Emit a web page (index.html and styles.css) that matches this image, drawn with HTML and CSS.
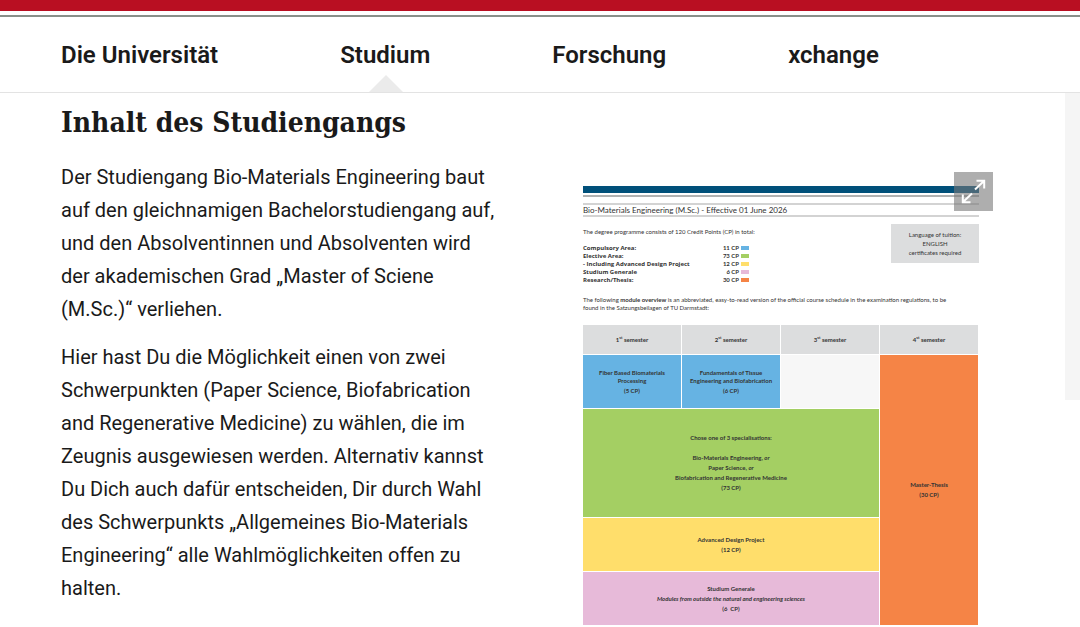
FILE: index.html
```html
<!DOCTYPE html>
<html lang="de">
<head>
    <meta charset="UTF-8">
    <meta name="viewport" content="width=device-width, initial-scale=1.0">
    <title>Inhalt des Studiengangs</title>
    <link rel="stylesheet" href="styles.css">
</head>
<body>
    <header class="header">
        <nav class="nav">
            <a href="#">Die Universität</a>
            <a href="#" class="active">Studium</a>
            <a href="#">Forschung</a>
            <a href="#">xchange</a>
        </nav>
    </header>

    <div class="page">
        <main class="content">
            <h2>Inhalt des Studiengangs</h2>
            <div class="columns">
                <div class="text">
                    <p>Der Studiengang Bio-Materials Engineering baut auf den gleichnamigen Bachelorstudiengang auf, und den Absolventinnen und Absolventen wird der akademischen Grad „Master of Sciene (M.Sc.)“ verliehen.</p>
                    <p>Hier hast Du die Möglichkeit einen von zwei Schwerpunkten (Paper Science, Biofabrication and Regenerative Medicine) zu wählen, die im Zeugnis ausgewiesen werden. Alternativ kannst Du Dich auch dafür entscheiden, Dir durch Wahl des Schwerpunkts „Allgemeines Bio-Materials Engineering“ alle Wahlmöglichkeiten offen zu halten.</p>
                </div>

                <figure class="plan">
                    <button class="zoom" type="button" aria-label="Bild vergrößern">
                        <svg width="39" height="39" viewBox="0 0 39 39" fill="none" stroke="#fff" stroke-width="2">
                            <path d="M21 17.5 30 9M22.5 8.8H30.2V16.5M18 21.5 9 30M8.8 22.5V30.2H16.5"/>
                        </svg>
                    </button>
                    <div class="bar"></div>
                    <div class="plan_title">Bio-Materials Engineering (M.Sc.) - Effective 01 June 2026</div>
                    <div class="intro">
                        <div>
                            <p class="total">The degree programme consists of 120 Credit Points (CP) in total:</p>
                            <table class="legend">
                                <tr><th>Compulsory Area:</th><td>11 CP</td><td><i class="blue"></i></td></tr>
                                <tr><th>Elective Area:</th><td>73 CP</td><td><i class="green"></i></td></tr>
                                <tr><th>- Including Advanced Design Project</th><td>12 CP</td><td><i class="yellow"></i></td></tr>
                                <tr><th>Studium Generale</th><td>6 CP</td><td><i class="pink"></i></td></tr>
                                <tr><th>Research/Thesis:</th><td>30 CP</td><td><i class="orange"></i></td></tr>
                            </table>
                        </div>
                        <div class="language">Language of tuition:<br>ENGLISH<br>certificates required</div>
                    </div>
                    <p class="note">The following <b>module overview</b> is an abbreviated, easy-to-read version of the official course schedule in the examination regulations, to be found in the Satzungsbeilagen of TU Darmstadt:</p>
                    <table class="modules">
                        <tr class="semesters">
                            <th>1<sup>st</sup> semester</th>
                            <th>2<sup>st</sup> semester</th>
                            <th>3<sup>st</sup> semester</th>
                            <th>4<sup>st</sup> semester</th>
                        </tr>
                        <tr class="row">
                            <td class="blue"><p>Fiber Based Biomaterials<br>Processing</p><p>(5 CP)</p></td>
                            <td class="blue"><p>Fundamentals of Tissue<br>Engineering and Biofabrication</p><p>(6 CP)</p></td>
                            <td class="empty"></td>
                            <td class="orange" rowspan="4"><p>Master-Thesis</p><p>(30 CP)</p></td>
                        </tr>
                        <tr class="row_big">
                            <td class="green" colspan="3">
                                <p>Chose one of 3 specialisations:</p>
                                <p>&nbsp;</p>
                                <p>Bio-Materials Engineering, <em>or</em></p>
                                <p>Paper Science, <em>or</em></p>
                                <p>Biofabrication and Regenerative Medicine</p>
                                <p>(73 CP)</p>
                            </td>
                        </tr>
                        <tr class="row">
                            <td class="yellow" colspan="3"><p>Advanced Design Project</p><p>(12 CP)</p></td>
                        </tr>
                        <tr class="row">
                            <td class="pink" colspan="3"><p>Studium Generale</p><p><em>Modules from outside the natural and engineering sciences</em></p><p>(6 &nbsp;CP)</p></td>
                        </tr>
                    </table>
                </figure>
            </div>
        </main>
        <aside class="side"></aside>
    </div>
</body>
</html>
```

FILE: styles.css
```css
* {
  box-sizing: border-box;
}
body {
  margin: 0;
  font-family: Roboto, sans-serif;
  color: #1a1a1a;
  background-color: #fff;
  overflow: hidden;
}

/* header */
.header {
  border-top: 11px solid #b90f22;
  border-bottom: 1px solid #e3e3e3;
  padding-top: 4px;
}
.nav {
  display: flex;
  gap: 122px;
  padding-left: 61px;
  border-top: 2px solid #898f89;
}
.nav a {
  position: relative;
  padding-top: 2px;
  font-size: 24px;
  font-weight: 600;
  line-height: 73px;
  color: #1a1a1a;
  text-decoration: none;
}
.nav .active::after {
  content: "";
  position: absolute;
  left: 50%;
  bottom: 0;
  margin-left: -16px;
  border: 17px solid transparent;
  border-top: none;
  border-bottom-color: #ebebeb;
}

/* content */
.page {
  display: flex;
  align-items: flex-start;
}
.content {
  flex: 1;
  padding: 10px 72px 0 61px;
}
.side {
  width: 15px;
  height: 307px;
  background-color: #f5f5f5;
}
h2 {
  margin: 0;
  font-family: "Roboto Slab", "DejaVu Serif Condensed", "DejaVu Serif", serif;
  font-size: 28px;
  line-height: 40px;
}
.columns {
  display: grid;
  grid-template-columns: 1fr 1fr;
  gap: 60px;
  padding-top: 18px;
}
.text p {
  margin: 0 0 15px;
  font-size: 20px;
  line-height: 33px;
}

/* study plan */
.plan {
  position: relative;
  margin: 11px 0 0;
  padding: 14px 14px 0 26px;
  font-family: Lato, sans-serif;
  font-size: 6px;
  line-height: 8px;
  color: #333;
}
.plan p {
  margin: 0;
}
.zoom {
  position: absolute;
  top: 0;
  right: 0;
  width: 39px;
  height: 39px;
  padding: 0;
  border: none;
  background-color: rgba(120, 120, 120, 0.6);
}
.zoom svg {
  display: block;
}
.bar {
  height: 11px;
  border-top: 7px solid #00507a;
  border-bottom: 2px solid #b0b2b2;
}
.plan_title {
  margin-top: 6px;
  border-top: 2px solid #d3d3d3;
  border-bottom: 2px solid #d3d3d3;
  font-size: 8px;
  line-height: 10px;
}
.intro {
  display: flex;
  justify-content: space-between;
  padding-top: 7px;
}
.total {
  padding-top: 4px;
}
.legend {
  margin-top: 8px;
  border-collapse: collapse;
  font-weight: 700;
}
.legend th,
.legend td {
  padding: 0;
}
.legend th {
  width: 130px;
  font-family: "Open Sans", sans-serif;
  text-align: left;
}
.legend td {
  width: 26px;
  text-align: right;
}
.legend td + td {
  width: 10px;
}
.legend i {
  display: block;
  width: 8px;
  height: 4px;
  margin-left: auto;
}
.language {
  width: 88px;
  height: 39px;
  padding-top: 6px;
  text-align: center;
  line-height: 9px;
  background-color: #dcddde;
}
.plan .note {
  margin-top: 12px;
  padding-right: 24px;
}
.modules {
  width: 100%;
  margin-top: 13px;
  table-layout: fixed;
  border-spacing: 0;
  text-align: center;
  font-weight: 700;
}
.modules th,
.modules td {
  padding: 0;
  border-right: 1px solid #fff;
  border-bottom: 1px solid #fff;
}
.modules p + p {
  padding-top: 2px;
}
.modules sup {
  font-size: 4px;
  line-height: 0;
}
.semesters {
  height: 30px;
  background-color: #dcddde;
}
.row {
  height: 54px;
}
.row_big {
  height: 109px;
}
.blue {
  background-color: #66b3e3;
}
.green {
  background-color: #a4cf63;
}
.yellow {
  background-color: #ffde6b;
}
.pink {
  background-color: #e7bad9;
}
.orange {
  background-color: #f58446;
}
.empty {
  background-color: #f7f7f7;
}
```
